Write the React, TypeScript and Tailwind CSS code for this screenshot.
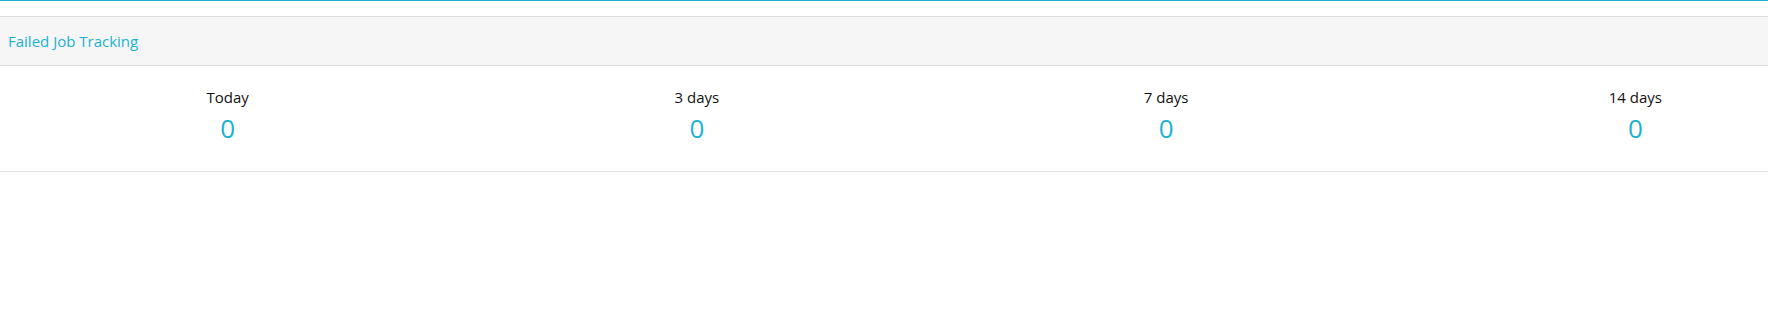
import React from "react";

const stats = [
  { label: "Today", value: 0 },
  { label: "3 days", value: 0 },
  { label: "7 days", value: 0 },
  { label: "14 days", value: 0 },
];

export default function App() {
  return (
    <div
      className="w-[1768px] h-[314px] overflow-hidden bg-white"
      style={{ fontFamily: '"Open Sans", "Noto Sans", sans-serif' }}
    >
      <div className="h-px bg-[#1ab2d0]" />
      <div className="mt-[15px] border-y border-[#dcdcdc]">
        <div className="h-[48px] bg-[#f6f6f6] flex items-center pl-[8px] text-[15px] text-[#1ab2d0]">
          Failed Job Tracking
        </div>
      </div>
      <div className="border-b border-[#e0e0e0] h-[106px]">
        <div className="flex w-[1877px] ml-[-7px] pt-[21px]">
          {stats.map((s) => (
            <div key={s.label} className="flex-1 flex flex-col items-center">
              <div className="text-[15px] leading-[20px] text-[#111]">{s.label}</div>
              <div className="text-[26px] leading-[42px] text-[#1ab2d0]">{s.value}</div>
            </div>
          ))}
        </div>
      </div>
    </div>
  );
}
